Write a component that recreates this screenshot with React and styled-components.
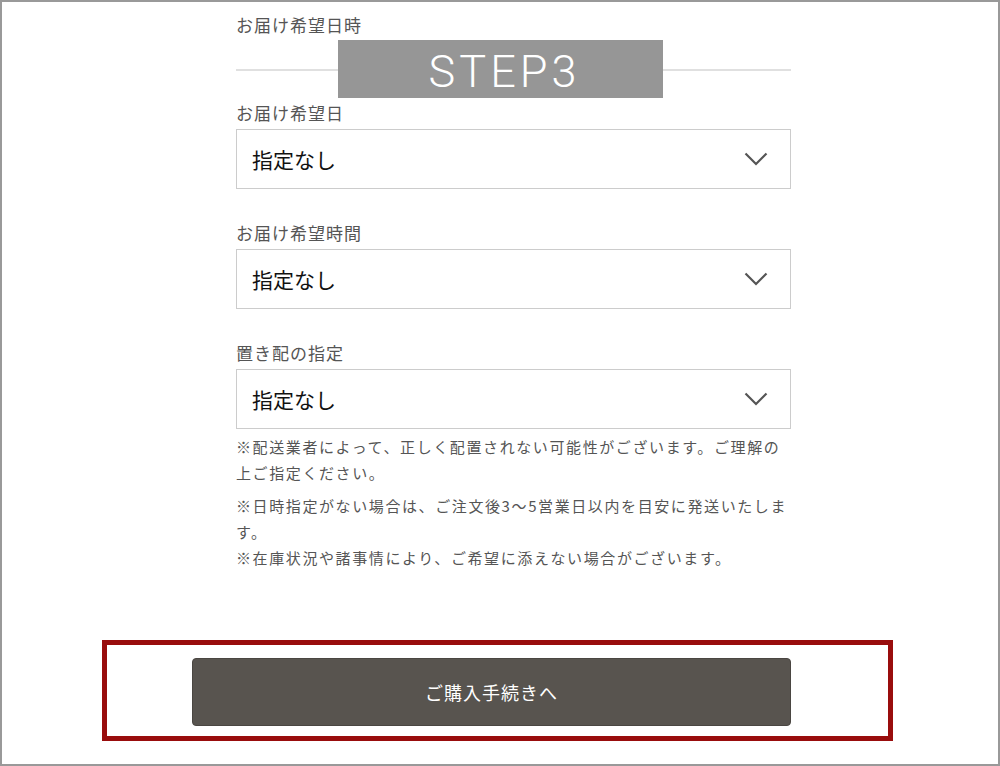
import styled, { createGlobalStyle } from 'styled-components';

const GlobalStyle = createGlobalStyle`
  html, body {
    margin: 0;
    padding: 0;
    background: #ffffff;
  }
  * {
    box-sizing: border-box;
  }
`;

const fields = [
  { label: 'お届け希望日', value: '指定なし' },
  { label: 'お届け希望時間', value: '指定なし' },
  { label: '置き配の指定', value: '指定なし' },
];

const Chevron = () => (
  <svg width='24' height='14' viewBox='0 0 24 14' fill='none'>
    <polyline points='1.5,1.5 12,12 22.5,1.5' stroke='#555555' strokeWidth='2.2' />
  </svg>
);

const App = () => {
  return (
    <>
      <GlobalStyle />
      <Frame>
        <Column>
          <Heading>お届け希望日時</Heading>
          <Rule />
          <Fields>
            {fields.map((field) => (
              <Field key={field.label}>
                <Label>{field.label}</Label>
                <Select>
                  <SelectValue>{field.value}</SelectValue>
                  <Chevron />
                </Select>
              </Field>
            ))}
          </Fields>
          <Notes>
            <Note>※配送業者によって、正しく配置されない可能性がございます。ご理解の上ご指定ください。</Note>
            <Note $gap>
              ※日時指定がない場合は、ご注文後3～5営業日以内を目安に発送いたします。
              <br />
              ※在庫状況や諸事情により、ご希望に添えない場合がございます。
            </Note>
          </Notes>
        </Column>
        <Highlight>
          <SubmitButton type='button'>ご購入手続きへ</SubmitButton>
        </Highlight>
        <StepBadge>STEP3</StepBadge>
      </Frame>
    </>
  );
};

export default App;

const Frame = styled.div`
  position: relative;
  display: flex;
  flex-direction: column;
  width: 1000px;
  height: 766px;
  border: 2px solid #999999;
  font-family: "Noto Sans CJK JP", "Noto Sans", sans-serif;
  overflow: hidden;
`;

const Column = styled.div`
  width: 555px;
  margin-left: 234px;
  padding-top: 11px;
`;

const Heading = styled.h2`
  margin: 0;
  font-size: 17px;
  font-weight: 400;
  line-height: 24px;
  letter-spacing: 1px;
  color: #555555;
`;

const Rule = styled.hr`
  margin: 32px 0 0;
  border: none;
  height: 2px;
  background: #e0e0e0;
`;

const Fields = styled.div`
  display: flex;
  flex-direction: column;
  gap: 32px;
  margin-top: 30px;
`;

const Field = styled.div`
  display: flex;
  flex-direction: column;
  gap: 4px;
`;

const Label = styled.label`
  font-size: 17px;
  line-height: 24px;
  letter-spacing: 1px;
  color: #555555;
`;

const Select = styled.div`
  display: flex;
  align-items: center;
  justify-content: space-between;
  height: 60px;
  padding: 0 22px 0 15px;
  border: 1px solid #cccccc;
  background: #ffffff;
`;

const SelectValue = styled.span`
  font-size: 21px;
  color: #111111;
`;

const Notes = styled.div`
  margin-top: 5px;
`;

const Note = styled.p`
  margin: ${({ $gap }) => ($gap ? '7px 0 0' : '0')};
  font-size: 15px;
  line-height: 26px;
  letter-spacing: 1.6px;
  color: #555555;
`;

const Highlight = styled.div`
  width: 791px;
  margin: 69px 0 0 100px;
  padding: 13px 0 10px 85px;
  border: 5px solid #990d0d;
`;

const SubmitButton = styled.button`
  display: flex;
  align-items: center;
  justify-content: center;
  width: 599px;
  height: 68px;
  border: 1px solid #4a4642;
  border-radius: 4px;
  background: #58544f;
  color: #ffffff;
  font-family: "Noto Sans CJK JP", "Noto Sans", sans-serif;
  font-size: 18px;
  letter-spacing: 1px;
  cursor: pointer;
`;

const StepBadge = styled.div`
  position: absolute;
  top: 38px;
  left: 336px;
  display: flex;
  align-items: center;
  justify-content: center;
  width: 325px;
  height: 58px;
  padding: 4px 0 0 8px;
  background: #969696;
  color: #ffffff;
  font-family: Roboto, "Liberation Sans", sans-serif;
  font-size: 45px;
  font-weight: 300;
  letter-spacing: 4px;
`;
